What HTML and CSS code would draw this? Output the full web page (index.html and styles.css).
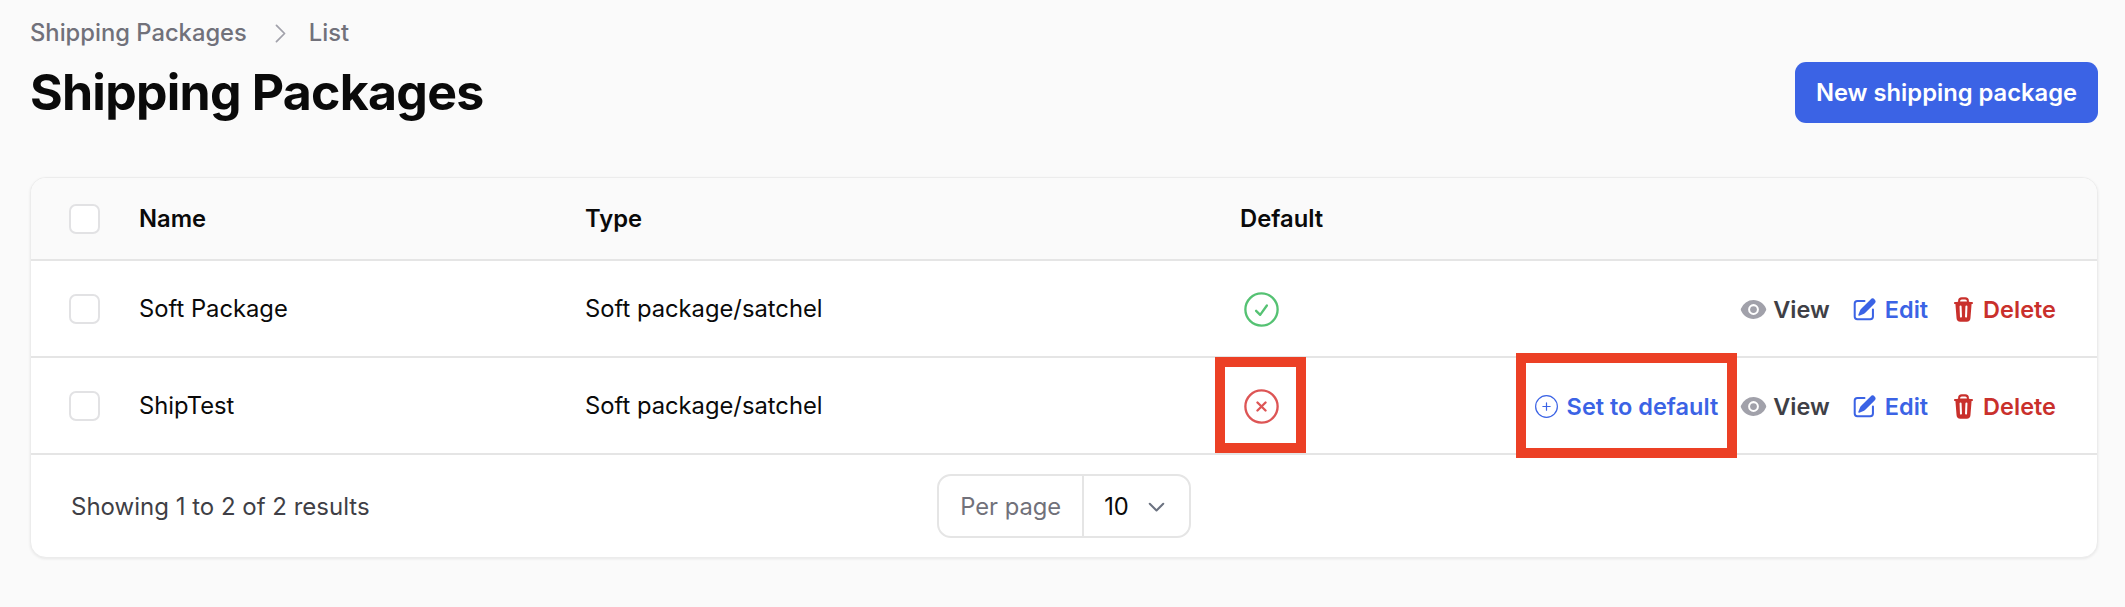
FILE: index.html
```html
<!DOCTYPE html>
<html lang="en">
<head>
<meta charset="utf-8">
<title>Shipping Packages</title>
<link rel="stylesheet" href="styles.css">
</head>
<body>
<main class="page">
  <header class="page-header">
    <div>
      <nav class="crumbs">
        <span>Shipping Packages</span>
        <svg class="crumb-sep" viewBox="0 0 20 20" fill="none" stroke="currentColor" stroke-width="1.3" stroke-linecap="round" stroke-linejoin="round"><path d="M7 4l6 6-6 6"/></svg>
        <span>List</span>
      </nav>
      <h1 class="title">Shipping Packages</h1>
    </div>
    <a class="primary-btn">New shipping package</a>
  </header>

  <section class="card">
    <div class="row head">
      <span class="box"></span>
      <span class="col-name">Name</span>
      <span class="col-type">Type</span>
      <span class="col-default">Default</span>
    </div>

    <div class="row body">
      <span class="box"></span>
      <span class="col-name">Soft Package</span>
      <span class="col-type">Soft package/satchel</span>
      <span class="col-default">
        <svg class="status ok" viewBox="0 0 24 24" fill="none" stroke="currentColor" stroke-width="1.3" stroke-linecap="round" stroke-linejoin="round"><path d="M9 12.75L11.25 15 15 9.75M21 12a9 9 0 11-18 0 9 9 0 0118 0z"/></svg>
      </span>
      <div class="actions">
        <a class="act view"><svg class="ico eye" viewBox="0 0 20 20" fill="currentColor"><path d="M10 12.5a2.5 2.5 0 100-5 2.5 2.5 0 000 5z"/><path fill-rule="evenodd" clip-rule="evenodd" d="M.664 10.59a1.651 1.651 0 010-1.186A10.004 10.004 0 0110 3c4.257 0 7.893 2.66 9.336 6.41.147.381.146.804 0 1.186A10.004 10.004 0 0110 17c-4.257 0-7.893-2.66-9.336-6.41zM14 10a4 4 0 11-8 0 4 4 0 018 0z"/></svg>View</a>
        <a class="act edit"><svg class="ico" viewBox="0 0 20 20" fill="currentColor"><path d="M5.433 13.917l1.262-3.155A4 4 0 017.58 9.42l6.92-6.918a2.121 2.121 0 013 3l-6.92 6.918c-.383.383-.84.685-1.343.886l-3.154 1.262a.5.5 0 01-.65-.65z"/><path d="M3.5 5.75c0-.69.56-1.25 1.25-1.25H10A.75.75 0 0010 3H4.75A2.75 2.75 0 002 5.75v9.5A2.75 2.75 0 004.75 18h9.5A2.75 2.75 0 0017 15.25V10a.75.75 0 00-1.5 0v5.25c0 .69-.56 1.25-1.25 1.25h-9.5c-.69 0-1.25-.56-1.25-1.25v-9.5z"/></svg>Edit</a>
        <a class="act del"><svg class="ico" viewBox="0 0 20 20" fill="currentColor"><path fill-rule="evenodd" clip-rule="evenodd" d="M8.75 1A2.75 2.75 0 006 3.75v.443c-.795.077-1.584.176-2.365.298a.75.75 0 10.23 1.482l.149-.022.841 10.518A2.75 2.75 0 007.596 19h4.807a2.75 2.75 0 002.742-2.53l.841-10.52.149.023a.75.75 0 00.23-1.482A41.03 41.03 0 0014 4.193V3.75A2.75 2.75 0 0011.25 1h-2.5zM10 4c.84 0 1.673.025 2.5.075V3.75c0-.69-.56-1.25-1.25-1.25h-2.5c-.69 0-1.25.56-1.25 1.25v.325C8.327 4.025 9.16 4 10 4zM8.58 7.72a.75.75 0 00-1.5.06l.3 7.5a.75.75 0 101.5-.06l-.3-7.5zm4.34.06a.75.75 0 10-1.5-.06l-.3 7.5a.75.75 0 101.5.06l.3-7.5z"/></svg>Delete</a>
      </div>
    </div>

    <div class="row body second">
      <span class="box"></span>
      <span class="col-name">ShipTest</span>
      <span class="col-type">Soft package/satchel</span>
      <span class="col-default">
        <svg class="status bad" viewBox="0 0 24 24" fill="none" stroke="currentColor" stroke-width="1.3" stroke-linecap="round" stroke-linejoin="round"><path d="M9.75 9.75l4.5 4.5m0-4.5l-4.5 4.5M21 12a9 9 0 11-18 0 9 9 0 0118 0z"/></svg>
      </span>
      <div class="actions">
        <a class="act set"><svg class="ico plus" viewBox="0 0 24 24" fill="none" stroke="currentColor" stroke-width="1" stroke-linecap="round" stroke-linejoin="round"><path d="M12 9v6m3-3H9m12 0a9 9 0 11-18 0 9 9 0 0118 0z"/></svg>Set to default</a>
        <a class="act view"><svg class="ico eye" viewBox="0 0 20 20" fill="currentColor"><path d="M10 12.5a2.5 2.5 0 100-5 2.5 2.5 0 000 5z"/><path fill-rule="evenodd" clip-rule="evenodd" d="M.664 10.59a1.651 1.651 0 010-1.186A10.004 10.004 0 0110 3c4.257 0 7.893 2.66 9.336 6.41.147.381.146.804 0 1.186A10.004 10.004 0 0110 17c-4.257 0-7.893-2.66-9.336-6.41zM14 10a4 4 0 11-8 0 4 4 0 018 0z"/></svg>View</a>
        <a class="act edit"><svg class="ico" viewBox="0 0 20 20" fill="currentColor"><path d="M5.433 13.917l1.262-3.155A4 4 0 017.58 9.42l6.92-6.918a2.121 2.121 0 013 3l-6.92 6.918c-.383.383-.84.685-1.343.886l-3.154 1.262a.5.5 0 01-.65-.65z"/><path d="M3.5 5.75c0-.69.56-1.25 1.25-1.25H10A.75.75 0 0010 3H4.75A2.75 2.75 0 002 5.75v9.5A2.75 2.75 0 004.75 18h9.5A2.75 2.75 0 0017 15.25V10a.75.75 0 00-1.5 0v5.25c0 .69-.56 1.25-1.25 1.25h-9.5c-.69 0-1.25-.56-1.25-1.25v-9.5z"/></svg>Edit</a>
        <a class="act del"><svg class="ico" viewBox="0 0 20 20" fill="currentColor"><path fill-rule="evenodd" clip-rule="evenodd" d="M8.75 1A2.75 2.75 0 006 3.75v.443c-.795.077-1.584.176-2.365.298a.75.75 0 10.23 1.482l.149-.022.841 10.518A2.75 2.75 0 007.596 19h4.807a2.75 2.75 0 002.742-2.53l.841-10.52.149.023a.75.75 0 00.23-1.482A41.03 41.03 0 0014 4.193V3.75A2.75 2.75 0 0011.25 1h-2.5zM10 4c.84 0 1.673.025 2.5.075V3.75c0-.69-.56-1.25-1.25-1.25h-2.5c-.69 0-1.25.56-1.25 1.25v.325C8.327 4.025 9.16 4 10 4zM8.58 7.72a.75.75 0 00-1.5.06l.3 7.5a.75.75 0 101.5-.06l-.3-7.5zm4.34.06a.75.75 0 10-1.5-.06l-.3 7.5a.75.75 0 101.5.06l.3-7.5z"/></svg>Delete</a>
      </div>
      <span class="mark mark-status"></span>
      <span class="mark mark-action"></span>
    </div>

    <footer class="card-foot">
      <span class="results">Showing 1 to 2 of 2 results</span>
      <div class="per-page">
        <span class="per-label">Per page</span>
        <span class="per-value">10
          <svg class="chev" viewBox="0 0 20 20" fill="none" stroke="currentColor" stroke-width="1.5" stroke-linecap="round" stroke-linejoin="round"><path d="M5 8l5 5 5-5"/></svg>
        </span>
      </div>
    </footer>
  </section>
</main>
</body>
</html>
```

FILE: styles.css
```css
* { box-sizing: border-box; }
html, body { margin: 0; height: 100%; }
body {
  background: #fafafa;
  font-family: Inter, "Liberation Sans", sans-serif;
  font-size: 23.75px;
  color: #0a0a0a;
}
.page { padding: 20px 27px 0 30px; }

.page-header {
  display: flex;
  justify-content: space-between;
  align-items: flex-start;
  height: 157px;
}
.crumbs {
  display: flex;
  align-items: center;
  gap: 18px;
  height: 26px;
  line-height: 26px;
  font-weight: 500;
  color: #71717a;
}
.crumb-sep { width: 27px; height: 27px; color: #a1a1aa; margin: 0 -3px 0 2px; }
.title {
  margin: 20px 0 0;
  font-size: 50px;
  line-height: 52px;
  font-weight: 700;
  letter-spacing: -0.75px;
}
.primary-btn {
  display: flex;
  align-items: center;
  justify-content: center;
  width: 303px;
  height: 61px;
  margin-top: 42px;
  border-radius: 11px;
  background: #3b63e5;
  color: #fff;
  font-weight: 600;
}

.card {
  background: #fff;
  border: 1px solid #ececec;
  border-radius: 16px;
  box-shadow: 0 1px 3px rgba(0, 0, 0, .08);
  height: 381px;
  overflow: hidden;
}
.row {
  position: relative;
  display: flex;
  align-items: center;
  padding-left: 38px;
  border-bottom: 2px solid #e5e5e5;
}
.head { height: 83px; background: #fafafa; font-weight: 600; }
.body { height: 97px; }
.second { height: 97px; }
.box {
  width: 31px;
  height: 30px;
  flex: none;
  background: #fff;
  border: 2px solid #e2e2e4;
  border-radius: 7px;
}
.col-name { width: 446px; margin-left: 39px; flex: none; }
.col-type { width: 655px; flex: none; }
.col-default { flex: none; display: flex; }
.status { width: 43px; height: 43px; margin-left: 0; margin-top: 2px; }
.ok { color: #55c273; }
.bad { color: #dd5555; }

.actions {
  margin-left: auto;
  margin-right: 41px;
  display: flex;
  align-items: center;
  gap: 22px;
  font-size: 23.5px;
  font-weight: 600;
  margin-top: 2px;
}
.act { display: flex; align-items: center; gap: 6px; }
.ico { width: 27px; height: 27px; flex: none; }
.plus { width: 29px; height: 29px; }
.view { color: #3f3f46; }
.view .ico { color: #a1a1aa; }
.edit { color: #3b63e5; }
.edit .ico { margin-left: -1px; margin-right: 1px; }
.del { color: #c9302c; }
.set { color: #3b63e5; gap: 6px; }

/* annotation rectangles drawn over the row */
.mark { position: absolute; border: 10px solid #ec4025; pointer-events: none; }
.mark-status { left: 1184px; top: -1px; width: 91px; height: 96px; }
.mark-action { left: 1485px; top: -5px; width: 221px; height: 105px; }

.card-foot {
  display: grid;
  grid-template-columns: 1fr auto 1fr;
  align-items: center;
  height: 102px;
  padding: 0 40px;
}
.results { color: #3f3f46; font-size: 24px; }
.per-page {
  display: flex;
  align-items: stretch;
  height: 64px;
  border: 2px solid #e5e5e5;
  border-radius: 14px;
}
.per-label {
  display: flex;
  align-items: center;
  padding: 0 21px;
  color: #71717a;
  border-right: 2px solid #e5e5e5;
}
.per-value { display: flex; align-items: center; gap: 14px; padding: 0 19px 0 20px; }
.chev { width: 27px; height: 27px; color: #6b7280; }
```
